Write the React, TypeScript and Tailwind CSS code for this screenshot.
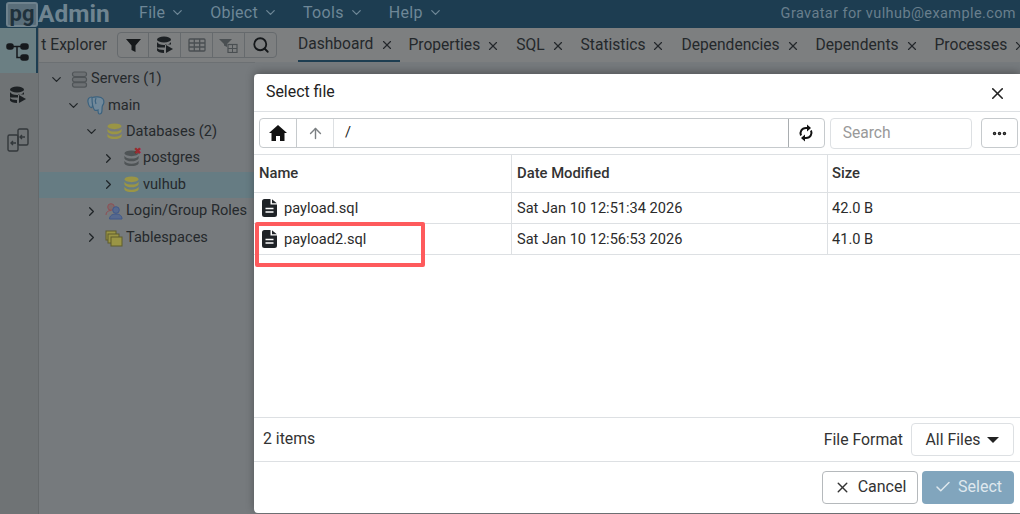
import { ChevronDown, ChevronRight, X, Search, ArrowUp, Ellipsis, Check } from "lucide-react";

const menus = ["File", "Object", "Tools", "Help"];
const tabs = ["Properties", "SQL", "Statistics", "Dependencies", "Dependents", "Processes"];

const DbIcon = ({ color = "#23282b", size = 18 }: { color?: string; size?: number }) => (
  <svg width={size} height={size} viewBox="0 0 18 18" fill={color}>
    <ellipse cx="9" cy="3.500" rx="7.500" ry="3" />
    <path d="M1.500 6c1 2 4 3 7.500 3s6.500-1 7.500-3v3c-1 2-4 3-7.500 3s-6.500-1-7.500-3z" />
    <path d="M1.500 11.500c1 2 4 3 7.500 3s6.500-1 7.500-3v3c-1 1.500-4 2.500-7.500 2.500s-6.500-1-7.500-2.500z" />
  </svg>
);

const DbPlayIcon = () => (
  <svg width="18" height="18" viewBox="0 0 18 18" fill="#1c2023">
    <ellipse cx="8" cy="3.500" rx="7" ry="3" />
    <path d="M1 6c1 2 3.500 3 7 3s6-1 7-3v2.500H9v3H1z" />
    <path d="M1 12c1 1 3 2 7 2v3c-4 0-6-1-7-2.500z" />
    <path d="M10 9l7 4-7 4z" />
  </svg>
);

const ServerIcon = () => (
  <svg width="17" height="17" viewBox="0 0 17 17" fill="#6c7073" stroke="#505558" strokeWidth="1.200">
    <rect x="1.500" y="1" width="14" height="4.500" rx="2" />
    <rect x="1.500" y="6.300" width="14" height="4.500" rx="2" />
    <rect x="1.500" y="11.600" width="14" height="4.500" rx="2" />
  </svg>
);

const ElephantIcon = () => (
  <svg width="18" height="19" viewBox="0 0 18 19" fill="#72899a" stroke="#3b627f" strokeWidth="1.200">
    <path d="M5 1c-3 0-4.500 2-4 5 .4 2.500 1.500 5 3 5.500 1 .3 1.500-1 1.500-2.500" />
    <path d="M5 1.500C8 .5 14 .5 16 3c1.500 2 1 5-.5 6.500-.5 1-.5 3-.5 4.500 0 2-1 4-2.500 4-1.500 0-1.500-2-1.500-4-1 .5-2.500.5-3.500 0C6 12 5 6 5 1.500z" />
    <path d="M9 2c-1 2-1 4 0 6" fill="none" />
  </svg>
);

const TreeRow = ({ indent, open, icon, label, selected }: { indent: string; open: boolean; icon: React.ReactNode; label: React.ReactNode; selected?: boolean }) => (
  <div className={`flex h-[26.400px] items-center ${indent} ${selected ? "bg-[#667c83]" : ""}`}>
    {open ? <ChevronDown size={15} className="mr-[6px] text-[#202528]" /> : <ChevronRight size={15} className="mr-[6px] text-[#202528]" />}
    <span className="mr-[3px] flex w-[18px] justify-center">{icon}</span>
    <span className="text-[14.600px] whitespace-nowrap text-[#25292c]">{label}</span>
  </div>
);

const FileRow = ({ name, date, size }: { name: string; date: string; size: string }) => (
  <div className="flex h-[31px] items-center border-b border-[#dde0e3] text-[14.600px] text-[#2b2b2b]">
    <div className="flex h-full w-[258px] items-center gap-[7px] border-r border-[#dde0e3] pl-[8px]">
      <svg width="15" height="18" viewBox="0 0 15 18">
        <path d="M2.500 0H8.500V5.500H15V15.500A2.500 2.500 0 0 1 12.500 18H2.500A2.500 2.500 0 0 1 0 15.500V2.500A2.500 2.500 0 0 1 2.500 0z" fill="#1f2327" />
        <path d="M10 0.200L14.800 4.200H10z" fill="#1f2327" />
        <path d="M3.500 9.500h8M3.500 13h8" stroke="#fff" strokeWidth="1.700" />
      </svg>
      <span className="pt-[2px]">{name}</span>
    </div>
    <div className="flex h-full w-[316px] items-center border-r border-[#dde0e3] pt-[1px] pl-[5px]">{date}</div>
    <div className="pt-[1px] pl-[4px]">{size}</div>
  </div>
);

export default function App() {
  return (
    <div className="relative h-[514px] w-[1020px] overflow-hidden bg-[#767a7d] font-['Roboto',sans-serif]">
      {/* top bar */}
      <div className="flex h-[28px] items-center bg-[#1d3d51] text-[16px] text-[#6e8797]">
        <div className="ml-[6px] flex h-full w-[133px] items-center text-[24.500px] font-bold">
          <span className="flex h-[25px] w-[32px] items-center justify-center rounded-[3px] border-2 border-[#6f828d] bg-[#5a6e7a] text-[22px] leading-none text-[#1f313c]">pg</span>
          <span className="leading-none text-[#6f8490]">Admin</span>
        </div>
        <div className="flex gap-[25px] pb-[3px]">
          {menus.map((m) => (
            <div key={m} className="flex items-center gap-[5px] tracking-[0.3px]">
              {m} <ChevronDown size={15} />
            </div>
          ))}
        </div>
        <div className="ml-auto mr-[4px] pb-[1px] text-[14.500px] tracking-[0.4px] text-[#697f8d]">Gravatar for vulhub@example.com</div>
      </div>

      <div className="flex h-[486px]">
        {/* left rail */}
        <div className="flex w-[39px] flex-none flex-col border-r border-[#65696b] bg-[#6f7375]">
          <div className="flex h-[45px] items-center justify-center border-r-2 border-[#1d3d51] bg-[#6b7f83]">
            <svg width="24" height="22" viewBox="0 0 24 22" fill="#16191c" stroke="#16191c" strokeWidth="1.500">
              <rect x="1" y="4" width="6" height="5" rx="2" />
              <rect x="15" y="4" width="7" height="5" rx="2" />
              <rect x="15" y="15" width="7" height="5" rx="2" />
              <path d="M7 6.500h8M11 6.500v11h4" fill="none" />
            </svg>
          </div>
          <div className="flex h-[44px] items-center justify-center pr-[3px]">
            <DbPlayIcon />
          </div>
          <div className="flex h-[45px] items-center justify-center pr-[3px]">
            <svg width="22" height="24" viewBox="0 0 22 24" fill="none" stroke="#33383b" strokeWidth="1.400">
              <rect x="1" y="7" width="10" height="16" rx="1.500" />
              <rect x="11" y="1" width="10" height="16" rx="1.500" />
              <path d="M9 15H4M6 13l-2 2 2 2M18 9h-5M15 7l-2 2 2 2" />
            </svg>
          </div>
        </div>

        <div className="flex min-w-0 flex-1 flex-col">
          {/* tab strip */}
          <div className="flex h-[34px] flex-none items-center bg-[#7d7f80] text-[#24282b]">
            <div className="flex w-[259px] flex-none items-center overflow-hidden">
              <span className="w-[68px] overflow-hidden pt-[2px] text-right text-[15.600px] whitespace-nowrap">t Explorer</span>
              <div className="ml-[10px] flex h-[26px] items-center rounded-[4px] border border-[#666a6d]">
                <div className="flex h-full w-[31px] items-center justify-center border-r border-[#666a6d]">
                  <svg width="15" height="15" viewBox="0 0 15 15" fill="#15181a"><path d="M0 1h15L9.500 7.500V14l-4-2V7.500z" /></svg>
                </div>
                <div className="flex h-full w-[32px] items-center justify-center border-r border-[#666a6d]"><DbPlayIcon /></div>
                <div className="flex h-full w-[32px] items-center justify-center border-r border-[#666a6d]">
                  <svg width="18" height="14" viewBox="0 0 18 14" fill="none" stroke="#4a4f52" strokeWidth="1.300">
                    <rect x="1" y="1" width="16" height="12" rx="1" />
                    <path d="M1 5h16M1 9h16M6.300 1v12M11.700 1v12" />
                  </svg>
                </div>
                <div className="flex h-full w-[32px] items-center justify-center border-r border-[#666a6d]">
                  <svg width="19" height="15" viewBox="0 0 19 15">
                    <path d="M0 1h13L8 6v3L5 7.500V6z" fill="#4a4f52" />
                    <rect x="9" y="6.500" width="9" height="8" fill="none" stroke="#4a4f52" strokeWidth="1.200" />
                    <path d="M9 10.500h9M13.500 6.500v8" stroke="#4a4f52" />
                  </svg>
                </div>
                <div className="flex h-full w-[31px] items-center justify-center"><Search size={18} strokeWidth={2.400} className="text-[#15181a]" /></div>
              </div>
            </div>
            <div className="flex h-full flex-1 items-center overflow-hidden text-[15.600px] whitespace-nowrap">
              <div className="flex h-full items-center gap-[7px] border-b-2 border-[#1d3d51] pt-[2px] pr-[6px]">
                Dashboard <X size={14} />
              </div>
              {tabs.map((t) => (
                <div key={t} className="flex h-full items-center gap-[6px] px-[8px] pt-[2px]">
                  {t} <X size={14} />
                </div>
              ))}
            </div>
          </div>

          {/* object tree */}
          <div className="w-[216px] border-t border-[#6c7073] pt-[3px]">
            <TreeRow indent="pl-[10px]" open icon={<ServerIcon />} label="Servers (1)" />
            <TreeRow indent="pl-[27px]" open icon={<ElephantIcon />} label="main" />
            <TreeRow indent="pl-[45px]" open icon={<DbIcon color="#9a9545" size={17} />} label="Databases (2)" />
            <TreeRow
              indent="pl-[62px]"
              open={false}
              icon={
                <span className="relative">
                  <DbIcon color="#4f5456" size={17} />
                  <span className="absolute -top-[3px] -right-[2px] text-[9px] leading-none font-bold text-[#9b2a30]">✖</span>
                </span>
              }
              label="postgres"
            />
            <TreeRow indent="pl-[62px]" open={false} selected icon={<DbIcon color="#9a9545" size={17} />} label="vulhub" />
            <TreeRow
              indent="pl-[45px]"
              open={false}
              icon={
                <svg width="18" height="18" viewBox="0 0 18 18">
                  <circle cx="6" cy="5" r="3.300" fill="#7a6a6c" stroke="#8f5055" />
                  <path d="M1 13c0-3 2-4.500 5-4.500" fill="none" stroke="#8f5055" />
                  <circle cx="11" cy="8" r="3.300" fill="#56698f" stroke="#41598a" />
                  <path d="M4.500 17c0-3 2.500-5 6.500-5s6 2 6 5z" fill="#56698f" stroke="#41598a" />
                </svg>
              }
              label="Login/Group Roles"
            />
            <TreeRow
              indent="pl-[45px]"
              open={false}
              icon={
                <svg width="18" height="18" viewBox="0 0 18 18" fill="#9a9545" stroke="#5e5c2c">
                  <rect x="1" y="2" width="10" height="9" />
                  <rect x="3" y="5" width="11" height="9" />
                  <rect x="6" y="8" width="11" height="9" />
                </svg>
              }
              label="Tablespaces"
            />
          </div>
        </div>
      </div>

      {/* file dialog */}
      <div className="absolute top-[74px] left-[254px] flex h-[439px] w-[766px] flex-col rounded-l-[4px] bg-white text-[#222] shadow-[0_-2px_8px_rgba(0,0,0,0.3)]">
        <div className="flex h-[38px] flex-none items-center justify-between border-b border-[#dde0e3] pr-[13px] pl-[12px] text-[15.900px]">
          <span className="pb-[1px]">Select file</span>
          <X size={19} strokeWidth={2} className="mt-[1px]" />
        </div>
        <div className="flex h-[43px] flex-none items-center border-b border-[#dde0e3] pr-[2px] pl-[5px]">
          <div className="flex h-[30px] w-[568px] items-center rounded-[4px] border border-[#c6cacd]">
            <div className="flex h-full w-[37px] items-center justify-center border-r border-[#c6cacd]">
              <svg width="18" height="16" viewBox="0 0 18 16" fill="#111"><path d="M9 0l9 8h-2.500v8H11v-5H7v5H2.500V8H0z" /></svg>
            </div>
            <div className="flex h-full w-[37px] items-center justify-center border-r border-[#dde0e3]"><ArrowUp size={17} className="text-[#7b7f82]" /></div>
            <div className="flex-1 pl-[11px] text-[14.600px]">/</div>
            <div className="flex h-full w-[36px] items-center justify-center border-l border-[#a9adb0]">
              <svg width="16" height="18" viewBox="0 0 16 18" fill="none" stroke="#111" strokeWidth="2">
                <path d="M3 11.500C1.500 8 3.500 4 8 4h2" />
                <path d="M13 6.500C14.500 10 12.500 14 8 14H6" />
                <path d="M9 0.500L13 4 9 7.500z" fill="#111" stroke="none" />
                <path d="M7 10.500L3 14l4 3.500z" fill="#111" stroke="none" />
              </svg>
            </div>
          </div>
          <div className="ml-[5px] flex h-[31px] w-[143px] items-center rounded-[4px] border border-[#dde0e3] pt-[2px] pl-[12px] text-[15.600px] text-[#999]">Search</div>
          <div className="ml-[9px] flex h-[30px] w-[37px] items-center justify-center rounded-[4px] border border-[#c6cacd]"><Ellipsis size={17} strokeWidth={3} /></div>
        </div>
        <div className="flex h-[38px] flex-none items-center border-b border-[#dde0e3] text-[14.800px] font-medium text-[#333]">
          <div className="flex h-full w-[258px] items-center border-r border-[#dde0e3] pl-[5px]">Name</div>
          <div className="flex h-full w-[316px] items-center border-r border-[#dde0e3] pl-[5px]">Date Modified</div>
          <div className="pl-[4px]">Size</div>
        </div>
        <FileRow name="payload.sql" date="Sat Jan 10 12:51:34 2026" size="42.0 B" />
        <FileRow name="payload2.sql" date="Sat Jan 10 12:56:53 2026" size="41.0 B" />
        <div className="flex-1" />
        <div className="flex h-[45px] flex-none items-center justify-between border-y border-[#dde0e3] pr-[6px] pl-[9px] text-[15.800px] text-[#333]">
          <span className="pb-[2px]">2 items</span>
          <div className="flex items-center gap-[8px]">
            <span>File Format</span>
            <div className="flex h-[33px] w-[103px] items-center justify-center gap-[7px] rounded-[4px] border border-[#dde0e3]">
              All Files
              <span className="h-0 w-0 border-x-[6px] border-t-[6px] border-x-transparent border-t-[#222]" />
            </div>
          </div>
        </div>
        <div className="flex h-[51px] flex-none items-center justify-end gap-[4px] pr-[6px] text-[16px]">
          <div className="flex h-[33px] w-[96px] items-center justify-center gap-[7px] rounded-[4px] border border-[#b5b9bc] pb-[1px] text-[#333]"><X size={17} /> Cancel</div>
          <div className="flex h-[33px] w-[92px] items-center justify-center gap-[6px] rounded-[4px] bg-[#81a5bd] pb-[1px] text-[#dfe8ee]"><Check size={18} /> Select</div>
        </div>
      </div>

      {/* red annotation */}
      <div className="absolute top-[222px] left-[255px] h-[45px] w-[170px] rounded-[2px] border-4 border-[#fe5a5c]" />
    </div>
  );
}
